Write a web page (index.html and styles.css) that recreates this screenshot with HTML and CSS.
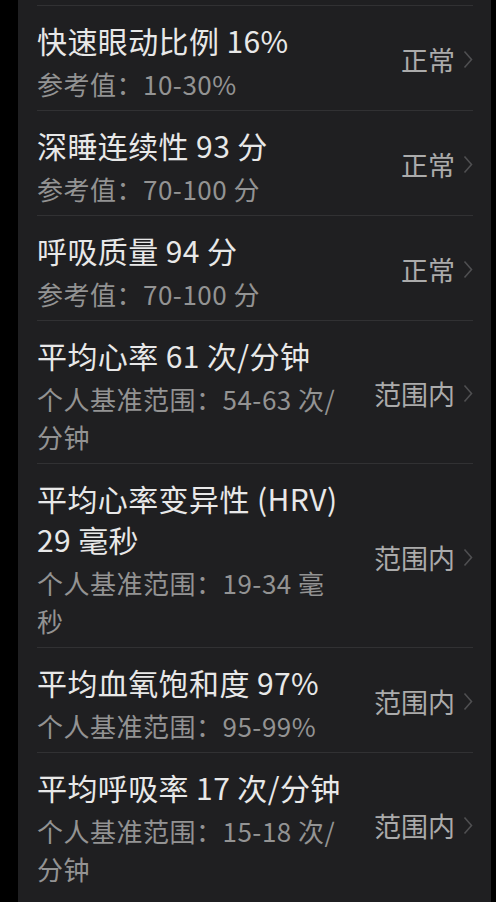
FILE: index.html
```html
<!DOCTYPE html>
<html lang="zh-CN">
<head>
<meta charset="utf-8">
<title>睡眠指标</title>
<link rel="stylesheet" href="styles.css">
</head>
<body>
<div class="card">
  <div class="row">
    <div class="info">
      <div class="title">快速眼动比例 16%</div>
      <div class="sub">参考值：10-30%</div>
    </div>
    <div class="status">正常<svg class="chev" viewBox="0 0 10 19" width="10" height="19"><polyline points="1.5,1.5 8.5,9.5 1.5,17.5"/></svg></div>
  </div>
  <div class="row">
    <div class="info">
      <div class="title">深睡连续性 93 分</div>
      <div class="sub">参考值：70-100 分</div>
    </div>
    <div class="status">正常<svg class="chev" viewBox="0 0 10 19" width="10" height="19"><polyline points="1.5,1.5 8.5,9.5 1.5,17.5"/></svg></div>
  </div>
  <div class="row">
    <div class="info">
      <div class="title">呼吸质量 94 分</div>
      <div class="sub">参考值：70-100 分</div>
    </div>
    <div class="status">正常<svg class="chev" viewBox="0 0 10 19" width="10" height="19"><polyline points="1.5,1.5 8.5,9.5 1.5,17.5"/></svg></div>
  </div>
  <div class="row">
    <div class="info">
      <div class="title">平均心率 61 次/分钟</div>
      <div class="sub">个人基准范围：54-63 次/分钟</div>
    </div>
    <div class="status">范围内<svg class="chev" viewBox="0 0 10 19" width="10" height="19"><polyline points="1.5,1.5 8.5,9.5 1.5,17.5"/></svg></div>
  </div>
  <div class="row">
    <div class="info">
      <div class="title">平均心率变异性 (HRV) 29 毫秒</div>
      <div class="sub">个人基准范围：19-34 毫秒</div>
    </div>
    <div class="status">范围内<svg class="chev" viewBox="0 0 10 19" width="10" height="19"><polyline points="1.5,1.5 8.5,9.5 1.5,17.5"/></svg></div>
  </div>
  <div class="row">
    <div class="info">
      <div class="title">平均血氧饱和度 97%</div>
      <div class="sub">个人基准范围：95-99%</div>
    </div>
    <div class="status">范围内<svg class="chev" viewBox="0 0 10 19" width="10" height="19"><polyline points="1.5,1.5 8.5,9.5 1.5,17.5"/></svg></div>
  </div>
  <div class="row">
    <div class="info">
      <div class="title">平均呼吸率 17 次/分钟</div>
      <div class="sub">个人基准范围：15-18 次/分钟</div>
    </div>
    <div class="status">范围内<svg class="chev" viewBox="0 0 10 19" width="10" height="19"><polyline points="1.5,1.5 8.5,9.5 1.5,17.5"/></svg></div>
  </div>
</div>
</body>
</html>
```

FILE: styles.css
```css
html, body {
  margin: 0;
  padding: 0;
  background: #000;
  height: 100%;
  overflow: hidden;
}
body {
  font-family: "Noto Sans CJK SC", "Noto Sans", sans-serif;
}
.card {
  margin-left: 18px;
  width: 473px;
  min-height: 902px;
  box-sizing: border-box;
  background: #1f1f21;
  padding: 5px 18px 0 19px;
}
.row {
  display: flex;
  align-items: center;
  gap: 24px;
  border-top: 1px solid #313133;
  padding: 14px 0 7px;
}
.info {
  flex: 0 0 305px;
  min-width: 0;
}
.title {
  font-size: 30px;
  line-height: 41px;
  letter-spacing: 0.4px;
  color: #e8e8e8;
}
.sub {
  margin-top: 4px;
  font-size: 26px;
  line-height: 38px;
  letter-spacing: 0.5px;
  color: #939393;
}
.status {
  margin-left: auto;
  display: flex;
  align-items: center;
  gap: 8px;
  font-size: 27px;
  color: #ababab;
  white-space: nowrap;
  margin-top: -4px;
}
.chev {
  fill: none;
  stroke: #4f4f51;
  stroke-width: 1.6;
}
```
